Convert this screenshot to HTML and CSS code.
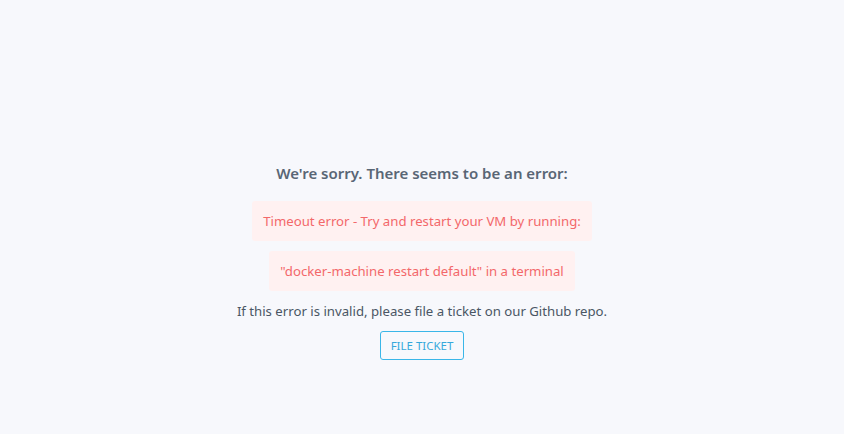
FILE: index.html
```html
<!DOCTYPE html>
<html>
<head>
<meta charset="utf-8">
<link rel="stylesheet" href="styles.css">
</head>
<body>
<div class="page">
  <div class="error">
    <h1 class="title">We're sorry. There seems to be an error:</h1>
    <p class="msg">Timeout error - Try and restart your VM by running:</p>
    <p class="msg">"docker-machine restart default" in a terminal</p>
    <p class="note">If this error is invalid, please file a ticket on our Github repo.</p>
    <button class="btn">FILE TICKET</button>
  </div>
</div>
</body>
</html>
```
FILE: styles.css
```css
html, body {
  margin: 0;
  padding: 0;
  background: #f7f8fc;
}
.page {
  width: 844px;
  height: 434px;
  box-sizing: border-box;
  padding-top: 162px;
  font-family: "Noto Sans", "Open Sans", sans-serif;
}
.error {
  display: flex;
  flex-direction: column;
  align-items: center;
}
.title {
  margin: 0;
  height: 22px;
  line-height: 22px;
  font-size: 15px;
  font-weight: 600;
  color: #596675;
}
.msg {
  margin: 0;
  padding: 0 11px;
  height: 40px;
  line-height: 40px;
  font-size: 13.2px;
  color: #f3686a;
  background: #fff1f1;
  border-radius: 3px;
}
.title + .msg {
  margin-top: 17px;
}
.msg + .msg {
  margin-top: 10px;
}
.note {
  margin: 10px 0 0;
  height: 20px;
  line-height: 20px;
  font-size: 13.2px;
  color: #4a5664;
}
.btn {
  margin-top: 10px;
  width: 84px;
  height: 29px;
  padding: 0;
  font-family: inherit;
  font-size: 11.5px;
  color: #36a8db;
  background: transparent;
  border: 1px solid #3ab6e8;
  border-radius: 3px;
}
```
